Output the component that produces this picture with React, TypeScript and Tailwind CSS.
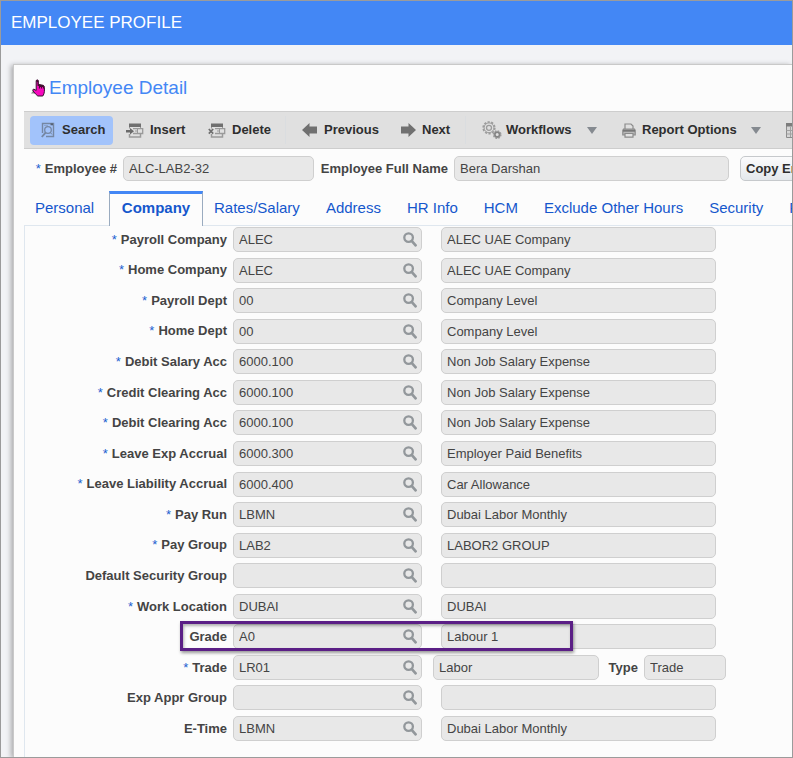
import React from "react";

type FieldRow = {
  id: string;
  label: string;
  required?: boolean;
  code: string;
  desc: string;
  type?: string;
  highlight?: boolean;
};

const rows: FieldRow[] = [
  { id: "payroll-company", label: "Payroll Company", required: true, code: "ALEC", desc: "ALEC UAE Company" },
  { id: "home-company", label: "Home Company", required: true, code: "ALEC", desc: "ALEC UAE Company" },
  { id: "payroll-dept", label: "Payroll Dept", required: true, code: "00", desc: "Company Level" },
  { id: "home-dept", label: "Home Dept", required: true, code: "00", desc: "Company Level" },
  { id: "debit-salary", label: "Debit Salary Acc", required: true, code: "6000.100", desc: "Non Job Salary Expense" },
  { id: "credit-clearing", label: "Credit Clearing Acc", required: true, code: "6000.100", desc: "Non Job Salary Expense" },
  { id: "debit-clearing", label: "Debit Clearing Acc", required: true, code: "6000.100", desc: "Non Job Salary Expense" },
  { id: "leave-exp", label: "Leave Exp Accrual", required: true, code: "6000.300", desc: "Employer Paid Benefits" },
  { id: "leave-liability", label: "Leave Liability Accrual", required: true, code: "6000.400", desc: "Car Allowance" },
  { id: "pay-run", label: "Pay Run", required: true, code: "LBMN", desc: "Dubai Labor Monthly" },
  { id: "pay-group", label: "Pay Group", required: true, code: "LAB2", desc: "LABOR2 GROUP" },
  { id: "security-group", label: "Default Security Group", code: "", desc: "" },
  { id: "work-location", label: "Work Location", required: true, code: "DUBAI", desc: "DUBAI" },
  { id: "grade", label: "Grade", code: "A0", desc: "Labour 1", highlight: true },
  { id: "trade", label: "Trade", required: true, code: "LR01", desc: "Labor", type: "Trade" },
  { id: "exp-appr", label: "Exp Appr Group", code: "", desc: "" },
  { id: "e-time", label: "E-Time", code: "LBMN", desc: "Dubai Labor Monthly" },
];

const fieldBox = "h-[25px] shrink-0 rounded-[5px] border border-[#cfcfcf] bg-[#e8e8e8] text-[13px] text-[#444]";

function HandIcon() {
  return (
    <svg width="14" height="18" viewBox="0 0 14 18" aria-hidden="true">
      <path d="M0 14.5 L4 9.5 V14.5 Z" fill="#8c8c8c" />
      <path
        d="M5.2 1.5 Q6.2 .2 7.3 1.5 V5.5 L12.2 6.3 Q13.4 6.8 13.4 8.5 V12.5 Q13.2 15 11.8 17 H6.8 Q4.5 15.2 2 12 Q1.2 10.4 2.8 10.2 L5.2 11.4 Z"
        fill="#f708bd"
        stroke="#35102c"
        strokeWidth="1"
      />
      <path d="M5.2 1.5 Q6.2 .5 7.3 1.5 V5.3 L12.2 6.3 L13.2 8 V9.5 H11.9 V8 H11 V9.5 H9.9 V8 H9 V9.5 H7.9 V7 H6.6 V3 H5.6 Z" fill="#43102f" />
    </svg>
  );
}

function SearchIcon() {
  return (
    <svg width="14" height="16" viewBox="0 0 14 16" fill="none" stroke="#7587a3" aria-hidden="true">
      <path d="M1.5 11 V1.5 H12.5 V14.5 H5" strokeWidth="1.4" />
      <path d="M9.5 2.3 H12" stroke="#566277" strokeWidth="2" />
      <path d="M3 3.5 H7" strokeWidth="1" opacity=".5" />
      <circle cx="7" cy="8" r="3.3" strokeWidth="1.3" />
      <path d="M4.6 10.6 L.8 15" strokeWidth="1.9" />
      <path d="M9.3 10.3 L11 12.5" strokeWidth="1" />
    </svg>
  );
}

function RecordIcon({ kind }: { kind: "insert" | "delete" }) {
  return (
    <svg width="18" height="15" viewBox="0 0 18 15" fill="none" stroke="#9a9a9a" aria-hidden="true">
      <path d="M3 .5 H15 V4 H3 Z" fill="#707070" stroke="none" />
      <path d="M3.5 4 V5.5 M14.5 4 V5.5" />
      <path d="M7 5.7 H16.7 V10.5 H7" strokeWidth="1.3" />
      <path d="M3.5 11 V14 H14.5 V10.5" strokeWidth="1.5" />
      <path d="M11.5 6 V10 M9 8 H11" />
      {kind === "insert" ? (
        <path d="M0 7 H4 V5 L8 8.3 L4 11.5 V9.5 H0 Z" fill="#6a6a6a" stroke="none" />
      ) : (
        <path d="M.8 6 L5.2 10.6 M5.2 6 L.8 10.6" stroke="#707070" strokeWidth="1.7" />
      )}
    </svg>
  );
}

function ArrowIcon({ left }: { left?: boolean }) {
  return (
    <svg width="15" height="14" viewBox="0 0 15 14" fill="#707070" aria-hidden="true">
      {left ? <path d="M0 7 L7.5 0 V3.5 H15 V10.5 H7.5 V14 Z" /> : <path d="M15 7 L7.5 0 V3.5 H0 V10.5 H7.5 V14 Z" />}
    </svg>
  );
}

function GearsIcon() {
  return (
    <svg width="20" height="18" viewBox="0 0 20 18" fill="none" stroke="#9c9c9c" aria-hidden="true">
      <circle cx="7" cy="6.8" r="5.8" strokeWidth="1.7" strokeDasharray="2.2 1.4" />
      <circle cx="7" cy="6.8" r="4.9" strokeWidth="1" />
      <circle cx="7" cy="6.8" r="2.5" strokeWidth="1.3" />
      <circle cx="15.2" cy="13.6" r="3.7" strokeWidth="1.4" strokeDasharray="1.7 1.2" fill="#b0b0b0" />
      <circle cx="15.2" cy="13.6" r="2.3" stroke="#858585" strokeWidth="1.6" fill="#e0e0e0" />
    </svg>
  );
}

function PrinterIcon() {
  return (
    <svg width="14" height="15" viewBox="0 0 14 15" fill="none" stroke="#8b8b8b" strokeWidth="1.2" aria-hidden="true">
      <path d="M3 6 V1 H9 L11 3 V6" />
      <path d="M1.5 6.2 H12.5 L13.2 7.5 V12 H.8 V7.5 Z" fill="#b9b9b9" />
      <path d="M1 7.8 H13" stroke="#777" strokeWidth="1.8" />
      <path d="M3 10.5 H11 V14.2 H3 Z" fill="#e2e2e2" />
    </svg>
  );
}

function TableIcon() {
  return (
    <svg width="14" height="15" viewBox="0 0 14 15" fill="none" stroke="#a2a2a2" aria-hidden="true">
      <path d="M.5 .5 H13.5 V14.5 H.5 Z" fill="#d6d6d6" stroke="#8d8d8d" />
      <path d="M.5 7.5 H13.5 M.5 11 H13.5 M4.5 4 V14 M9 4 V14" />
      <path d="M0 0 H14 V3.5 H0 Z" fill="#7d7d7d" stroke="none" />
    </svg>
  );
}

function Caret() {
  return (
    <svg width="10" height="7" viewBox="0 0 10 7" fill="#858a90" aria-hidden="true">
      <path d="M0 0 H10 L5 7 Z" />
    </svg>
  );
}

function LookupIcon() {
  return (
    <svg width="14" height="15" viewBox="0 0 14 15" fill="none" stroke="#92979b" aria-hidden="true">
      <circle cx="5.6" cy="5.6" r="4.3" strokeWidth="2.3" />
      <path d="M8.9 9.2 L12.6 13.3" strokeWidth="2.7" strokeLinecap="round" />
    </svg>
  );
}

function Label({ htmlFor, required, children }: { htmlFor: string; required?: boolean; children: React.ReactNode }) {
  return (
    <label htmlFor={htmlFor} className="whitespace-nowrap text-[13px] font-bold text-[#444]">
      {required && <span className="mr-1 font-normal text-[#1a5fd0]">*</span>}
      {children}
    </label>
  );
}

function FormRow({ row }: { row: FieldRow }) {
  return (
    <div className="relative flex h-[25px] shrink-0 items-center">
      <div className="mr-1.5 w-[202px] shrink-0 text-right">
        <Label htmlFor={row.id} required={row.required}>{row.label}</Label>
      </div>
      <div className={`${fieldBox} flex w-[189px] items-center pr-1`}>
        <input id={row.id} readOnly defaultValue={row.code} className="h-full min-w-0 flex-1 bg-transparent pl-[5px] outline-none" />
        <button type="button" aria-label={`Look up ${row.label}`}>
          <LookupIcon />
        </button>
      </div>
      {row.type ? (
        <>
          <input readOnly aria-label={`${row.label} description`} defaultValue={row.desc} className={`${fieldBox} ml-[11px] w-[166px] px-[5px]`} />
          <div className="mr-1.5 w-[39px] shrink-0 text-right">
            <Label htmlFor="trade-type">Type</Label>
          </div>
          <input id="trade-type" readOnly defaultValue={row.type} className={`${fieldBox} w-[82px] px-[5px]`} />
        </>
      ) : (
        <input readOnly aria-label={`${row.label} description`} defaultValue={row.desc} className={`${fieldBox} ml-[19px] w-[275px] px-[5px]`} />
      )}
      {row.highlight && (
        <div className="pointer-events-none absolute -top-[3px] left-[155px] h-[30px] w-[393px] border-[3px] border-[#5b1f86] shadow-[1px_2px_3px_rgba(0,0,0,0.4),inset_1px_2px_3px_rgba(0,0,0,0.3)]" />
      )}
    </div>
  );
}

const toolButton = "flex h-[29px] shrink-0 items-center whitespace-nowrap";

const otherTabs = ["Rates/Salary", "Address", "HR Info", "HCM", "Exclude Other Hours", "Security", "Pay History"];

export default function App() {
  return (
    <div className="flex min-h-screen flex-col overflow-hidden border border-[#9b9b9b] bg-[#f2f3f6] font-['Liberation_Sans',Arial,sans-serif] text-[13px]">
      <header className="flex h-11 items-center bg-[#4387f5] pl-[10px]">
        <h1 className="text-[17px] text-white">EMPLOYEE PROFILE</h1>
      </header>

      <main className="ml-3 mt-[19px] flex flex-1 flex-col border-l border-t border-[#c9c9c9] bg-[#fcfcfc] pl-[10px] shadow-[-2px_1px_5px_rgba(0,0,0,0.3)]">
        <div className="flex h-[46px] items-center gap-1 pl-[7px]">
          <HandIcon />
          <h2 className="text-[19px] text-[#4387f5]">Employee Detail</h2>
        </div>

        <div className="flex h-[38px] items-center overflow-hidden border-y border-[#cdcdcd] bg-[#e0e0e0] pl-1.5 font-bold text-[#2e2e2e]">
          <button type="button" className={`${toolButton} mr-[13px] w-[83px] gap-[7px] rounded bg-[#a2c3fb] pl-[11px]`}>
            <SearchIcon />Search
          </button>
          <button type="button" className={`${toolButton} w-[82px] gap-1.5`}>
            <RecordIcon kind="insert" />Insert
          </button>
          <button type="button" className={`${toolButton} w-[77px] gap-1.5`}>
            <RecordIcon kind="delete" />Delete
          </button>
          <span className="mr-4 h-7 w-px shrink-0 bg-[#dadde0]" />
          <button type="button" className={`${toolButton} w-[99px] gap-[7px]`}>
            <ArrowIcon left />Previous
          </button>
          <button type="button" className={`${toolButton} w-[64px] gap-1.5`}>
            <ArrowIcon />Next
          </button>
          <span className="mr-4 h-7 w-px shrink-0 bg-[#dadde0]" />
          <button type="button" className={`${toolButton} mr-[25px] w-[115px] gap-1`}>
            <GearsIcon />Workflows<span className="ml-auto"><Caret /></span>
          </button>
          <button type="button" className={`${toolButton} mr-[25px] w-[139px] gap-1.5`}>
            <PrinterIcon />Report Options<span className="ml-auto"><Caret /></span>
          </button>
          <button type="button" aria-label="Export" className={toolButton}>
            <TableIcon />
          </button>
        </div>

        <div className="mt-[7px] flex items-center overflow-hidden">
          <div className="mr-1.5 w-[93px] shrink-0 text-right">
            <Label htmlFor="emp-no" required>Employee #</Label>
          </div>
          <input id="emp-no" readOnly defaultValue="ALC-LAB2-32" className={`${fieldBox} w-[191px] px-[5px]`} />
          <div className="mr-1.5 w-[134px] shrink-0 text-right">
            <Label htmlFor="emp-name">Employee Full Name</Label>
          </div>
          <input id="emp-name" readOnly defaultValue="Bera Darshan" className={`${fieldBox} w-[275px] px-[5px]`} />
          <button type="button" className="ml-[11px] h-[25px] shrink-0 whitespace-nowrap rounded-[5px] border border-[#c6c9cc] bg-linear-to-b from-[#fbfbfc] to-[#e4e8ec] px-[5px] font-bold text-[#2e2e2e]">
            Copy Employee
          </button>
        </div>

        <nav className="relative z-10 -mb-px mt-2.5 flex h-[35px] items-center overflow-hidden whitespace-nowrap text-[15px] text-[#1557cc]">
          <a href="#personal" className="w-[85px] shrink-0 pl-[11px]">Personal</a>
          <a href="#company" aria-current="page" className="flex h-full w-[94px] shrink-0 items-center justify-center border-x border-t-[3px] border-x-[#9aabbf] border-t-[#4387f5] bg-[#fcfcfc] pb-[3px] font-bold">
            Company
          </a>
          <div className="flex shrink-0 gap-[26px] pl-[11px]">
            {otherTabs.map((t) => (
              <a key={t} href={`#${t.replace(/\W/g, "")}`}>{t}</a>
            ))}
          </div>
        </nav>

        <section className="flex-1 border-l border-t border-[#dfe7ef] pb-[15px] pt-px">
          <form className="flex min-h-[514px] flex-col justify-between">
            {rows.map((r) => (
              <FormRow key={r.id} row={r} />
            ))}
          </form>
        </section>
      </main>
    </div>
  );
}
